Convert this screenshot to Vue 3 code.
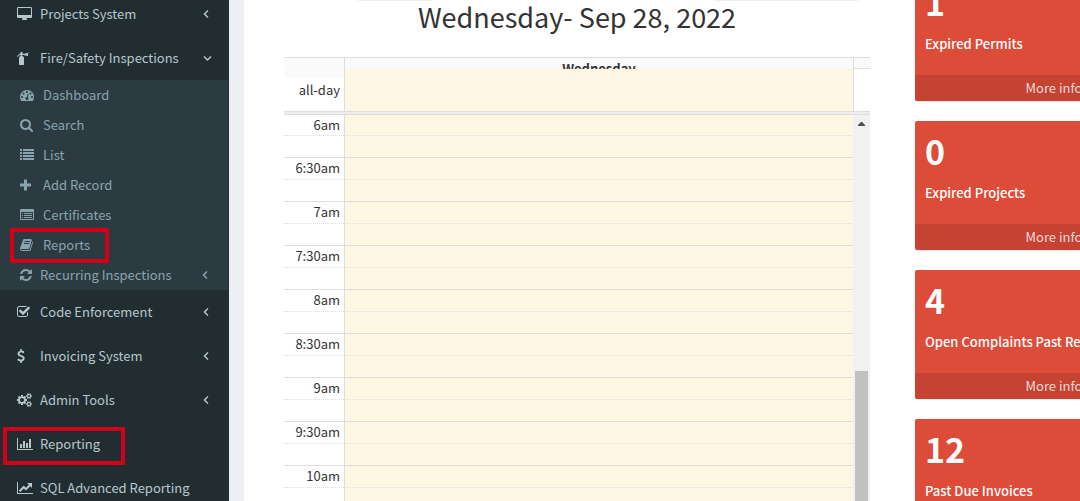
<script setup>
const icons = {
  desktop: { box: '0 0 1920 1792', w: 15, d: 'M160 0H1760Q1826 0 1873 47T1920 160V1248Q1920 1314 1873 1361T1760 1408H1216Q1216 1445 1232 1486T1264 1557 1280 1600Q1280 1626 1261 1645T1216 1664H704Q678 1664 659 1645T640 1600Q640 1586 656 1556T688 1486 704 1408H160Q94 1408 47 1361T0 1248V160Q0 94 47 47T160 0ZM128 128V1024H1792V128Z' },
  extinguisher: { box: '0 0 1408 1792', w: 11, d: 'M512 256q0-26-19-45t-45-19-45 19-19 45 19 45 45 19 45-19 19-45zm896-96v448q0 14-11 25-9 7-21 7-4 0-7-1l-448-96q-11-2-18-11t-7-20h-256v102q111 23 184 111t73 205v800q0 26-19 45t-45 19h-512q-26 0-45-19t-19-45v-800q0-106 62-190t162-115v-113h-32q-59 0-115 23t-92 53-64 60-39 45-14 18q-18 35-58 35-16 0-28-7-23-12-32-36t4-47q5-9 16-26t45-58 74-74 100-66 128-51q-22-45-22-96 0-80 56-136t136-56 136 56 56 136q0 36-12 64h300q0-11 7-20t18-11l448-96q3-1 7-1 12 0 21 7 11 11 11 25z' },
  dashboard: { box: '0 0 1792 1792', w: 14, d: 'M384 1152q0-53-37.500-90.500t-90.500-37.500-90.500 37.500-37.500 90.500 37.500 90.500 90.500 37.500 90.500-37.500 37.500-90.500zm192-448q0-53-37.500-90.500t-90.500-37.500-90.500 37.500-37.500 90.500 37.500 90.500 90.500 37.500 90.500-37.500 37.500-90.500zm428 481l101-382q6-26-7.500-48.500t-38.500-29.500-48 6.500-30 39.500l-101 382q-60 5-107 43.500t-63 98.500q-20 77 20 146t117 89 146-20 89-117q16-60-6-117t-72-91zm660-33q0-53-37.500-90.500t-90.500-37.500-90.500 37.500-37.500 90.500 37.500 90.500 90.500 37.500 90.500-37.500 37.500-90.500zm-640-640q0-53-37.500-90.500t-90.500-37.500-90.500 37.500-37.500 90.500 37.500 90.500 90.500 37.500 90.500-37.500 37.500-90.500zm448 192q0-53-37.500-90.500t-90.500-37.500-90.500 37.500-37.500 90.500 37.500 90.500 90.500 37.500 90.500-37.500 37.500-90.500zm320 448q0 261-141 483-19 29-54 29h-1402q-35 0-54-29-141-221-141-483 0-182 71-348t191-286 286-191 348-71 348 71 286 191 191 286 71 348z' },
  search: { box: '0 0 1664 1792', w: 13, d: 'M1152 832q0-185-131.500-316.500t-316.500-131.500-316.500 131.500-131.500 316.500 131.500 316.500 316.500 131.500 316.500-131.500 131.500-316.500zm512 832q0 52-38 90t-90 38q-54 0-90-38l-343-342q-179 124-399 124-143 0-273.500-55.500t-225-150-150-225-55.500-273.500 55.500-273.500 150-225 225-150 273.500-55.500 273.500 55.500 225 150 150 225 55.500 273.500q0 220-124 399l343 343q37 37 37 90z' },
  list: { box: '0 0 14 14', w: 14, d: 'M0 1h2v2H0zM3 1h11v2H3zM0 4h2v2H0zM3 4h11v2H3zM0 7h2v2H0zM3 7h11v2H3zM0 10h2v2H0zM3 10h11v2H3z' },
  plus: { box: '0 0 11 14', w: 11, d: 'M4 1.500h3v4h4v3H7v4H4v-4H0v-3h4z' },
  listalt: { box: '0 0 14 14', w: 14, d: 'M1 1h12q1 0 1 1v9q0 1-1 1H1q-1 0-1-1V2q0-1 1-1zM1 4v7h12V4zM2 5h1v1H2zM4 5h8v1H4zM2 7h1v1H2zM4 7h8v1H4zM2 9h1v1H2zM4 9h8v1H4z' },
  book: { box: '0 0 1664 1792', w: 13, d: 'M1639 478q40 57 18 129l-275 906q-19 64-76.500 107.500t-122.500 43.500h-923q-77 0-148.500-53.500t-99.500-131.500q-24-67-2-127 0-4 3-27t4-37q1-8-3-21.500t-3-19.500q2-11 8-21t16.500-23.500 16.500-23.500q23-38 45-91.500t30-91.500q3-10 .5-30t-.5-28q3-11 17-28t17-23q21-36 42-92t25-90q1-9-2.500-32t.5-28q4-13 22-30.500t22-22.500q19-26 42.500-84.500t27.500-96.500q1-8-3-25.500t-2-26.500q2-8 9-18t18-23 17-21q8-12 16.500-30.500t15-35 16-36 19.500-32 26.500-23.500 36-11.500 47.500 5.500l-1 3q38-9 51-9h761q74 0 114 56t18 130l-274 906q-36 119-71.500 153.500t-128.500 34.500h-869q-27 0-38 15-11 16-1 43 24 70 144 70h923q29 0 56-15.500t35-41.500l300-987q7-22 5-57 38 15 59 43zm-1064 2q-4 13 2 22.500t20 9.500h608q13 0 25.500-9.500t16.500-22.500l21-64q4-13-2-22.500t-20-9.500h-608q-13 0-25.500 9.500t-16.500 22.500zm-83 256q-4 13 2 22.500t20 9.500h608q13 0 25.500-9.500t16.500-22.500l21-64q4-13-2-22.500t-20-9.500h-608q-13 0-25.500 9.500t-16.500 22.500z' },
  refresh: { box: '0 0 1536 1792', w: 12, d: 'M1511 1056q0 5-1 7-64 268-268 434.500t-478 166.500q-146 0-282.500-55t-243.500-157l-129 129q-19 19-45 19t-45-19-19-45v-448q0-26 19-45t45-19h448q26 0 45 19t19 45-19 45l-137 137q71 66 161 102t187 36q134 0 250-65t186-179q11-17 53-117 8-23 30-23h192q13 0 22.500 9.500t9.500 22.500zm25-800v448q0 26-19 45t-45 19h-448q-26 0-45-19t-19-45 19-45l138-138q-148-137-349-137-134 0-250 65t-186 179q-11 17-53 117-8 23-30 23h-199q-13 0-22.500-9.500t-9.500-22.500v-7q65-268 270-434.500t480-166.500q146 0 284 55.500t245 156.500l130-129q19-19 45-19t45 19 19 45z' },
  check: { box: '0 0 1664 1792', w: 13, d: 'M1408 930v318q0 119-84.500 203.500t-203.500 84.500h-832q-119 0-203.500-84.500t-84.500-203.500v-832q0-119 84.500-203.500t203.500-84.500h832q63 0 117 25 15 7 18 23 3 17-9 29l-49 49q-14 14-32 8-23-6-45-6h-832q-66 0-113 47t-47 113v832q0 66 47 113t113 47h832q66 0 113-47t47-113v-254q0-13 9-22l64-64q15-15 35-7t20 29zm231-489l-814 814q-24 24-57 24t-57-24l-430-430q-24-24-24-57t24-57l110-110q24-24 57-24t57 24l263 263 647-647q24-24 57-24t57 24l110 110q24 24 24 57t-24 57z' },
  dollar: { box: '0 0 1024 1792', w: 8, d: 'M978 1185q0 153-99.500 263.500t-258.500 136.500v175q0 14-9 23t-23 9h-135q-13 0-22.500-9.500t-9.500-22.500v-175q-66-9-127.500-31t-101.500-44.500-74-48-46.500-37.500-17.500-18q-17-21-2-41l103-135q7-10 23-12 15-2 24 9l2 2q113 99 243 125 37 8 74 8 81 0 142.500-43t61.500-122q0-28-15-53t-33.500-42-58.500-37.500-66-32-80-32.500q-39-16-61.500-25t-61.500-26.500-62.500-31-56.500-35.500-53.500-42.500-43.500-49-35.500-58-21-66.500-8.500-78q0-138 98-242t255-134v-180q0-13 9.500-22.500t22.500-9.500h135q14 0 23 9t9 23v176q57 6 110.500 23t87 33.500 63.500 37.500 39 29 15 14q17 18 5 38l-81 146q-8 15-23 16-14 3-27-7-3-3-14.500-12t-39-26.500-58.500-32-74.500-26-85.500-11.500q-95 0-155 43t-60 111q0 26 8.500 48t29.500 41.500 39.500 33 56 31 60.500 27 70 27.500q53 20 81 31.500t76 35 75.500 42.500 62 50 53 63.500 31.500 76.500 13 94z' },
  cogs: { box: '0 0 1920 1792', w: 15, d: 'M896 896q0-106-75-181t-181-75-181 75-75 181 75 181 181 75 181-75 75-181zm768 512q0-52-38-90t-90-38-90 38-38 90q0 53 37.500 90.500t90.500 37.500 90.500-37.500 37.500-90.500zm0-1024q0-52-38-90t-90-38-90 38-38 90q0 53 37.500 90.500t90.500 37.500 90.500-37.500 37.500-90.500zm-384 421v185q0 10-7 19.500t-16 10.500l-155 24q-11 35-32 76 34 48 90 115 7 11 7 20 0 12-7 19-23 30-82.500 89.500t-78.500 59.500q-11 0-21-7l-115-90q-37 19-77 31-11 108-23 155-7 24-30 24h-186q-11 0-20-7.500t-10-17.500l-23-153q-34-10-75-31l-118 89q-7 7-20 7-11 0-21-8-144-133-144-160 0-9 7-19 10-14 41-53t47-61q-23-44-35-82l-152-24q-10-1-17-9.500t-7-19.500v-185q0-10 7-19.500t16-10.500l155-24q11-35 32-76-34-48-90-115-7-11-7-20 0-12 7-20 22-30 82-89t79-59q11 0 21 7l115 90q34-18 77-32 11-108 23-154 7-24 30-24h186q11 0 20 7.500t10 17.500l23 153q34 10 75 31l118-89q8-7 20-7 11 0 21 8 144 133 144 160 0 8-7 19-12 16-42 54t-45 60q23 48 34 82l152 23q10 2 17 10.500t7 19.500zm640 533v140q0 16-149 31-12 27-30 52 51 113 51 138 0 4-4 7-122 71-124 71-8 0-46-47t-52-68q-20 2-30 2t-30-2q-14 21-52 68t-46 47q-2 0-124-71-4-3-4-7 0-25 51-138-18-25-30-52-149-15-149-31v-140q0-16 149-31 13-29 30-52-51-113-51-138 0-4 4-7 4-2 35-20t59-34 30-16q8 0 46 46.500t52 67.500q20-2 30-2t30 2q51-71 92-112l6-2q4 0 124 70 4 3 4 7 0 25-51 138 17 23 30 52 149 15 149 31zm0-1024v140q0 16-149 31-12 27-30 52 51 113 51 138 0 4-4 7-122 71-124 71-8 0-46-47t-52-68q-20 2-30 2t-30-2q-14 21-52 68t-46 47q-2 0-124-71-4-3-4-7 0-25 51-138-18-25-30-52-149-15-149-31v-140q0-16 149-31 13-29 30-52-51-113-51-138 0-4 4-7 4-2 35-20t59-34 30-16q8 0 46 46.500t52 67.500q20-2 30-2t30 2q51-71 92-112l6-2q4 0 124 70 4 3 4 7 0 25-51 138 17 23 30 52 149 15 149 31z' },
  bars: { box: '0 0 16 14', w: 16, d: 'M0 1h1v11h15v1H0zM3 7h2v4H3zM6 4h2v7H6zM9 6h2v5H9zM12 2h2v9h-2z' },
  line: { box: '0 0 16 14', w: 16, d: 'M0 1h1v11h15v1H0zM10 2h5v5l-1.700-1.700L9 9.600 6.800 7.400 3.200 11 1.800 9.600 6.800 4.600 9 6.800l2.800-3z' },
  left: { box: '0 0 9 14', w: 9, d: 'M5 3.500 1.500 7 5 10.500' },
  down: { box: '0 0 9 14', w: 9, d: 'M1 5.500 4.500 9 8 5.500' }
}

const menu = [
  { label: 'Projects System', icon: 'desktop', arrow: 'left' },
  {
    label: 'Fire/Safety Inspections', icon: 'extinguisher', arrow: 'down',
    children: [
      { label: 'Dashboard', icon: 'dashboard' },
      { label: 'Search', icon: 'search' },
      { label: 'List', icon: 'list' },
      { label: 'Add Record', icon: 'plus' },
      { label: 'Certificates', icon: 'listalt' },
      { label: 'Reports', icon: 'book', marked: true },
      { label: 'Recurring Inspections', icon: 'refresh', arrow: 'left', group: true }
    ]
  },
  { label: 'Code Enforcement', icon: 'check', arrow: 'left' },
  { label: 'Invoicing System', icon: 'dollar', arrow: 'left' },
  { label: 'Admin Tools', icon: 'cogs', arrow: 'left' },
  { label: 'Reporting', icon: 'bars', marked: true },
  { label: 'SQL Advanced Reporting', icon: 'line' }
]

const slots = ['6am', '6:30am', '7am', '7:30am', '8am', '8:30am', '9am', '9:30am', '10am']

const cards = [
  { count: 1, label: 'Expired Permits' },
  { count: 0, label: 'Expired Projects' },
  { count: 4, label: 'Open Complaints Past Resolution' },
  { count: 12, label: 'Past Due Invoices' }
]
</script>

<template>
  <div class="page">
    <nav class="sidebar">
      <ul class="menu">
        <li v-for="item in menu" :key="item.label">
          <a href="#" class="link" :class="{ marked: item.marked }">
            <span class="icon"><svg :viewBox="icons[item.icon].box" :width="icons[item.icon].w" height="14"><path :d="icons[item.icon].d" fill-rule="evenodd" /></svg></span>
            <span class="label">{{ item.label }}</span>
            <svg v-if="item.arrow" class="arrow" :viewBox="icons[item.arrow].box" :width="icons[item.arrow].w" height="14"><path :d="icons[item.arrow].d" /></svg>
          </a>
          <ul v-if="item.children" class="submenu">
            <li v-for="sub in item.children" :key="sub.label">
              <a href="#" class="sublink" :class="{ marked: sub.marked, group: sub.group }">
                <span class="icon"><svg :viewBox="icons[sub.icon].box" :width="icons[sub.icon].w" height="14"><path :d="icons[sub.icon].d" fill-rule="evenodd" /></svg></span>
                <span class="label">{{ sub.label }}</span>
                <svg v-if="sub.arrow" class="arrow" :viewBox="icons[sub.arrow].box" :width="icons[sub.arrow].w" height="14"><path :d="icons[sub.arrow].d" /></svg>
              </a>
            </li>
          </ul>
        </li>
      </ul>
    </nav>

    <main class="content">
      <section class="calendar">
        <div class="toolbar"><span></span><span></span></div>
        <h2>Wednesday- Sep 28, 2022</h2>
        <div class="head">
          <div class="corner"></div>
          <div class="day">Wednesday</div>
          <div class="gutter"></div>
        </div>
        <div class="allday">
          <div class="axis">all-day</div>
          <div class="cell"></div>
          <div class="gutter"></div>
        </div>
        <div class="divider"></div>
        <div class="grid">
          <table>
            <tbody>
              <template v-for="slot in slots" :key="slot">
                <tr class="major"><td class="time">{{ slot }}</td><td class="cell"></td></tr>
                <tr class="minor"><td class="time"></td><td class="cell"></td></tr>
              </template>
            </tbody>
          </table>
          <div class="scrollbar">
            <svg viewBox="0 0 7 4" width="7" height="4"><path d="M0 4V3L3 0h1l3 3v1z" /></svg>
            <div class="thumb"></div>
          </div>
        </div>
      </section>

      <aside class="stats">
        <article v-for="card in cards" :key="card.label" class="card">
          <div class="inner">
            <h3>{{ card.count }}</h3>
            <p>{{ card.label }}</p>
          </div>
          <a href="#" class="more">More info</a>
        </article>
      </aside>
    </main>
  </div>
</template>

<style>
body {
  margin: 0;
  overflow: hidden;
}
</style>

<style scoped>
*,
*::after {
  box-sizing: border-box;
}

.page {
  display: flex;
  height: 100vh;
  overflow: hidden;
  background: #ecf0f5;
  color: #333;
  font: 400 13px/20px "Source Sans Pro", "Noto Sans CJK SC", sans-serif;
}

ul {
  margin: 0;
  padding: 0;
  list-style: none;
}

a {
  color: inherit;
  text-decoration: none;
}

svg {
  display: block;
  overflow: visible;
}

.sidebar {
  flex: 0 0 229px;
  background: #222d32;
  color: #b8c7ce;
}

.menu {
  margin-top: -8px;
}

.link,
.sublink {
  position: relative;
  display: flex;
  align-items: center;
  height: 44px;
  padding: 0 17px;
  white-space: nowrap;
}

.icon {
  flex: 0 0 23px;
}

.icon path {
  fill: currentColor;
}

.arrow {
  margin-left: auto;
}

.arrow path {
  fill: none;
  stroke: currentColor;
  stroke-width: 1.5;
}

.submenu {
  margin-right: 1px;
  background: #2c3b41;
  color: #8aa4af;
}

.sublink {
  height: 30px;
  padding-left: 20px;
}

.sublink.group .icon {
  flex-basis: 20px;
}

.marked::after {
  content: "";
  position: absolute;
  border: 4px solid #d0021b;
}

.link.marked::after {
  top: 5px;
  left: 3px;
  width: 122px;
  height: 38px;
}

.sublink.marked::after {
  top: -2px;
  left: 10px;
  width: 99px;
  height: 35px;
}

.content {
  flex: 1;
  display: flex;
  gap: 45px;
  min-width: 0;
  margin-left: 15px;
  padding-left: 40px;
  background: #fff;
}

.calendar {
  flex: 1;
  display: flex;
  flex-direction: column;
  min-width: 0;
}

.toolbar {
  display: flex;
  justify-content: space-between;
  height: 1px;
  padding: 0 12px 0 74px;
}

.toolbar span {
  width: 74px;
  background: #f0f0f0;
}

.toolbar span + span {
  width: 144px;
}

h2 {
  margin: 0 0 24px;
  font-size: 27px;
  font-weight: 400;
  line-height: 32px;
  text-align: center;
}

.head {
  display: grid;
  grid-template: 11px / 60px 1fr 17px;
  height: 12px;
  border-top: 1px solid #ddd;
}

.corner {
  height: 20px;
  background: #fafafa;
}

.day {
  overflow: hidden;
  border-left: 1px solid #ddd;
  background: #fafafa;
  font-weight: 700;
  line-height: 22px;
  text-align: center;
}

.gutter {
  border-left: 1px solid #ddd;
}

.head .gutter {
  border-bottom: 1px solid #ddd;
  background: #fafafa;
}

.allday {
  display: grid;
  grid-template-columns: 60px 1fr 17px;
  height: 42px;
}

.axis {
  padding: 11px 4px 0 0;
  text-align: right;
}

.cell {
  border-left: 1px solid #ddd;
  background: #fdf6e2;
}

.divider {
  flex: none;
  height: 4px;
  border: 1px solid #ddd;
  border-width: 1px 0;
  background: #eee;
}

.grid {
  flex: 1;
  display: flex;
  min-height: 0;
  overflow: hidden;
}

table {
  flex: 1;
  height: max-content;
  border-spacing: 0;
  table-layout: fixed;
}

td {
  height: 22px;
  padding: 0;
  border-top: 1px solid #ddd;
  vertical-align: top;
}

tr:first-child td {
  height: 20px;
  border-top: 0;
}

.minor td {
  border-top-style: dotted;
}

.time {
  width: 60px;
  padding-right: 4px;
  line-height: 20px;
  text-align: right;
}

.scrollbar {
  flex: 0 0 17px;
  display: flex;
  flex-direction: column;
  align-items: center;
  padding-top: 7px;
  background: #f1f1f1;
}

.scrollbar path {
  fill: #505050;
}

.thumb {
  width: 13px;
  flex: 1;
  margin-top: 245px;
  background: #c1c1c1;
}

.stats {
  flex: 0 0 165px;
  min-width: 0;
  margin-top: -28px;
}

.card {
  width: 278px;
  margin-bottom: 20px;
  overflow: hidden;
  border-radius: 2px;
  background: #dd4b39;
  box-shadow: 0 1px 1px rgba(0, 0, 0, 0.1);
  color: #fff;
}

.inner {
  height: 103px;
  padding: 10px;
}

h3 {
  margin: 0 0 12px;
  font-size: 34px;
  font-weight: 700;
  line-height: 40px;
}

p {
  margin: 0;
  font-weight: 500;
  white-space: nowrap;
}

.more {
  display: block;
  height: 26px;
  padding: 3px 0;
  background: rgba(0, 0, 0, 0.1);
  color: rgba(255, 255, 255, 0.8);
  text-align: center;
}
</style>
